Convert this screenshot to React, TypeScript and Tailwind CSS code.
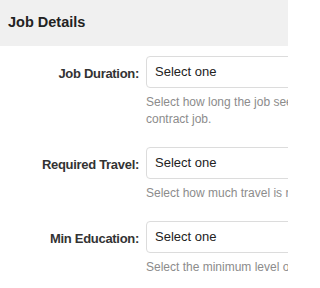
import React from 'react';

interface FieldProps {
  label: string;
  help: React.ReactNode;
}

const Field: React.FC<FieldProps> = ({ label, help }) => {
  return (
    <div className="grid grid-cols-[139px_1fr] gap-x-[7px] mb-[19px]">
      <label className="h-[32px] flex items-center justify-end pt-[4px] text-[13px] font-bold tracking-[-0.3px] text-[#333]">
        {label}
      </label>
      <div>
        <div className="h-[32px] w-[220px] flex items-center px-[8px] rounded-[4px] border border-[#dcdcdc] bg-white text-[13px] text-[#222]">
          Select one
        </div>
        <p className="mt-[6px] text-[12px] leading-[17px] text-[#8c8c8c] whitespace-nowrap">{help}</p>
      </div>
    </div>
  );
};

export default function App() {
  return (
    <div className="w-[288px] h-[288px] overflow-hidden bg-white font-['Liberation_Sans',Arial,sans-serif]">
      <div className="w-[420px]">
        <div className="h-[46px] flex items-center px-[8px] bg-[#f0f0f0]">
          <h2 className="text-[14.5px] font-bold text-[#222]">Job Details</h2>
        </div>
        <div className="pt-[10px]">
          <Field
            label="Job Duration:"
            help={
              <>
                Select how long the job seeker will be needed, full-time or
                <br />
                contract job.
              </>
            }
          />
          <Field label="Required Travel:" help="Select how much travel is required for this position." />
          <Field label="Min Education:" help="Select the minimum level of education required." />
        </div>
      </div>
    </div>
  );
}
